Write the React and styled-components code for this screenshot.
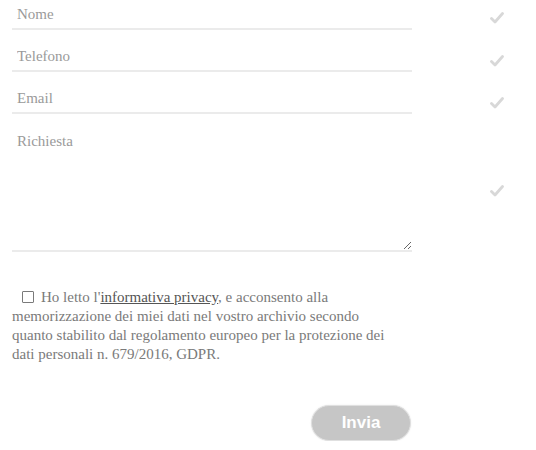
import React from "react";
import styled, { createGlobalStyle } from "styled-components";

const GlobalStyle = createGlobalStyle`
  body {
    margin: 0;
    background: #ffffff;
    font-family: "Liberation Serif", "Times New Roman", serif;
  }
`;

const Form = styled.form`
  width: 536px;
  padding: 0 0 0 12px;
  box-sizing: border-box;
`;

const Row = styled.div`
  display: grid;
  grid-template-columns: 400px 1fr;
  align-items: end;
  height: ${(p) => p.$height}px;
`;

const Field = styled.div`
  height: 100%;
  display: flex;
  align-items: flex-end;
  border-bottom: 2px solid #ebebeb;
  box-sizing: border-box;
`;

const Input = styled.input`
  width: 100%;
  height: 28px;
  border: none;
  outline: none;
  background: transparent;
  padding: 0 0 0 5px;
  box-sizing: border-box;
  font-family: "Liberation Serif", serif;
  font-size: 15px;
  color: #666;
  &::placeholder {
    color: #9a9a9a;
  }
`;

const TextArea = styled.textarea`
  width: 100%;
  height: 100%;
  border: none;
  outline: none;
  background: transparent;
  padding: 19px 5px 6px;
  box-sizing: border-box;
  font-family: "Liberation Serif", serif;
  font-size: 15px;
  color: #666;
  resize: vertical;
  display: block;
  &::placeholder {
    color: #9a9a9a;
  }
`;

const Check = styled.div`
  display: flex;
  padding-left: 78px;
  padding-bottom: ${(p) => p.$lift}px;
`;

const Consent = styled.label`
  display: block;
  width: 385px;
  margin-top: 36px;
  font-size: 15px;
  line-height: 19px;
  color: #7a7a7a;
  text-indent: 10px;
`;

const Box = styled.span`
  display: inline-block;
  width: 10px;
  height: 10px;
  border: 1.5px solid #7a7a7a;
  border-radius: 1px;
  margin-right: 7px;
  vertical-align: -1px;
  text-indent: 0;
`;

const Link = styled.a`
  color: #555;
  text-decoration: underline;
`;

const Actions = styled.div`
  width: 400px;
  display: flex;
  justify-content: flex-end;
  margin-top: 41px;
`;

const Button = styled.button`
  width: 100px;
  height: 36px;
  margin-right: 1px;
  border-radius: 18px;
  border: 1px solid #e0e0e0;
  background: #c6c6c6;
  color: #ffffff;
  font-family: "Liberation Sans", Arial, sans-serif;
  font-weight: bold;
  font-size: 17px;
  box-shadow: 0 0 2px rgba(0, 0, 0, 0.08);
  cursor: pointer;
`;

function Tick() {
  return (
    <svg width="14" height="12" viewBox="0 0 14 12">
      <path d="M1.5 6.5 L5 10 L12.5 1.5" fill="none" stroke="#d8d8d8" strokeWidth="2.8" strokeLinecap="round" strokeLinejoin="round" />
    </svg>
  );
}

export default function App() {
  return (
    <>
      <GlobalStyle />
      <Form onSubmit={(e) => e.preventDefault()}>
        <Row $height={30}>
          <Field>
            <Input placeholder="Nome" />
          </Field>
          <Check $lift={6}><Tick /></Check>
        </Row>
        <Row $height={42}>
          <Field>
            <Input placeholder="Telefono" />
          </Field>
          <Check $lift={5}><Tick /></Check>
        </Row>
        <Row $height={42}>
          <Field>
            <Input placeholder="Email" />
          </Field>
          <Check $lift={5}><Tick /></Check>
        </Row>
        <Row $height={138}>
          <Field>
            <TextArea placeholder="Richiesta" />
          </Field>
          <Check $lift={55}><Tick /></Check>
        </Row>
        <Consent>
          <Box />
          Ho letto l'<Link href="#">informativa privacy</Link>, e acconsento alla
          memorizzazione dei miei dati nel vostro archivio secondo quanto
          stabilito dal regolamento europeo per la protezione dei dati personali
          n. 679/2016, GDPR.
        </Consent>
        <Actions>
          <Button type="submit">Invia</Button>
        </Actions>
      </Form>
    </>
  );
}
